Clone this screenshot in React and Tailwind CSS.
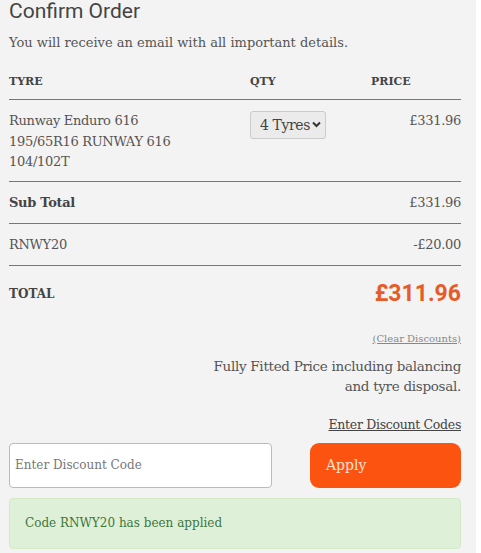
import React, { useState } from 'react';

const slab = { fontFamily: '"DejaVu Serif", "Liberation Serif", serif' };
const sans = { fontFamily: 'Roboto, "Open Sans", sans-serif' };

const ConfirmOrder = () => {
  const [qty, setQty] = useState('4');
  const [code, setCode] = useState('');

  return (
    <div className="min-h-screen bg-white">
      <div className="w-[476px] min-h-[553px] bg-[#f3f3f3] pl-[9px] pr-[15px] text-[#555]" style={slab}>
        <h1 className="text-[21px] leading-[22px] text-[#444]" style={sans}>
          Confirm Order
        </h1>
        <p className="mt-[11px] text-[13px] leading-[20px]">
          You will receive an email with all important details.
        </p>

        <div className="mt-[19px] grid grid-cols-[241px_121px_1fr] border-b border-[#777] pb-[7px] text-[11px] font-bold leading-[20px] text-[#444]">
          <div>TYRE</div>
          <div>QTY</div>
          <div>PRICE</div>
        </div>

        <div className="grid grid-cols-[241px_121px_1fr] border-b border-[#777] pt-[11px] pb-[8px] text-[13px] leading-[20.5px] tracking-[-0.3px]">
          <div>
            Runway Enduro 616
            <br />
            195/65R16 RUNWAY 616
            <br />
            104/102T
          </div>
          <div>
            <div className="relative w-[76px]">
              <select
                value={qty}
                onChange={(e) => setQty(e.target.value)}
                className="h-[28px] w-[76px] appearance-none rounded-[3px] border border-[#ccc] bg-[#ebebeb] pl-[9px] text-[14px] tracking-[-0.4px] text-[#444]"
                style={slab}
              >
                <option value="1">1 Tyre</option>
                <option value="2">2 Tyres</option>
                <option value="3">3 Tyres</option>
                <option value="4">4 Tyres</option>
              </select>
              <svg className="pointer-events-none absolute right-[5px] top-[10px]" width="9" height="7" viewBox="0 0 9 7">
                <path d="M1 1.5 L4.5 5 L8 1.5" fill="none" stroke="#333" strokeWidth="2" />
              </svg>
            </div>
          </div>
          <div className="text-right">£331.96</div>
        </div>

        <div className="flex justify-between border-b border-[#777] py-[10px] text-[13px] leading-[21px] tracking-[-0.3px]">
          <span className="font-bold text-[#444]">Sub Total</span>
          <span>£331.96</span>
        </div>

        <div className="flex justify-between border-b border-[#777] py-[10px] text-[13px] leading-[21px] tracking-[-0.3px]">
          <span>RNWY20</span>
          <span>-£20.00</span>
        </div>

        <div className="flex items-center justify-between pt-[14px] pb-[10px]">
          <span className="text-[12px] font-bold text-[#444]">TOTAL</span>
          <span className="text-[23px] font-bold leading-[28px] text-[#e65c28]" style={sans}>
            £311.96
          </span>
        </div>

        <div className="mt-[14px] text-right text-[10px] leading-[14px]">
          <a href="#" className="text-[#888] underline">
            (Clear Discounts)
          </a>
        </div>

        <p className="mt-[10px] text-right text-[13.5px] leading-[20px] tracking-[-0.3px]">
          Fully Fitted Price including balancing
          <br />
          and tyre disposal.
        </p>

        <div className="mt-[19px] text-right text-[12.5px] leading-[20px] tracking-[-0.3px]">
          <a href="#" className="text-[#444] underline">
            Enter Discount Codes
          </a>
        </div>

        <div className="mt-[8px] flex justify-between">
          <input
            type="text"
            value={code}
            onChange={(e) => setCode(e.target.value)}
            placeholder="Enter Discount Code"
            className="h-[45px] w-[263px] rounded-[4px] border border-[#bbb] bg-white px-[5px] text-[12px] text-[#444] placeholder:text-[#777] focus:outline-none"
            style={slab}
          />
          <button className="h-[45px] w-[151px] rounded-[9px] bg-[#fc5310] pl-[16px] text-left text-[14px] text-[#fde1d4]" style={slab}>
            Apply
          </button>
        </div>

        <div className="mt-[10px] flex h-[51px] items-center rounded-[4px] border border-[#d6e9c6] bg-[#dff0d8] px-[15px] text-[12px] text-[#3c763d]">
          Code RNWY20 has been applied
        </div>
      </div>
    </div>
  );
};

export default function App() {
  return <ConfirmOrder />;
}
